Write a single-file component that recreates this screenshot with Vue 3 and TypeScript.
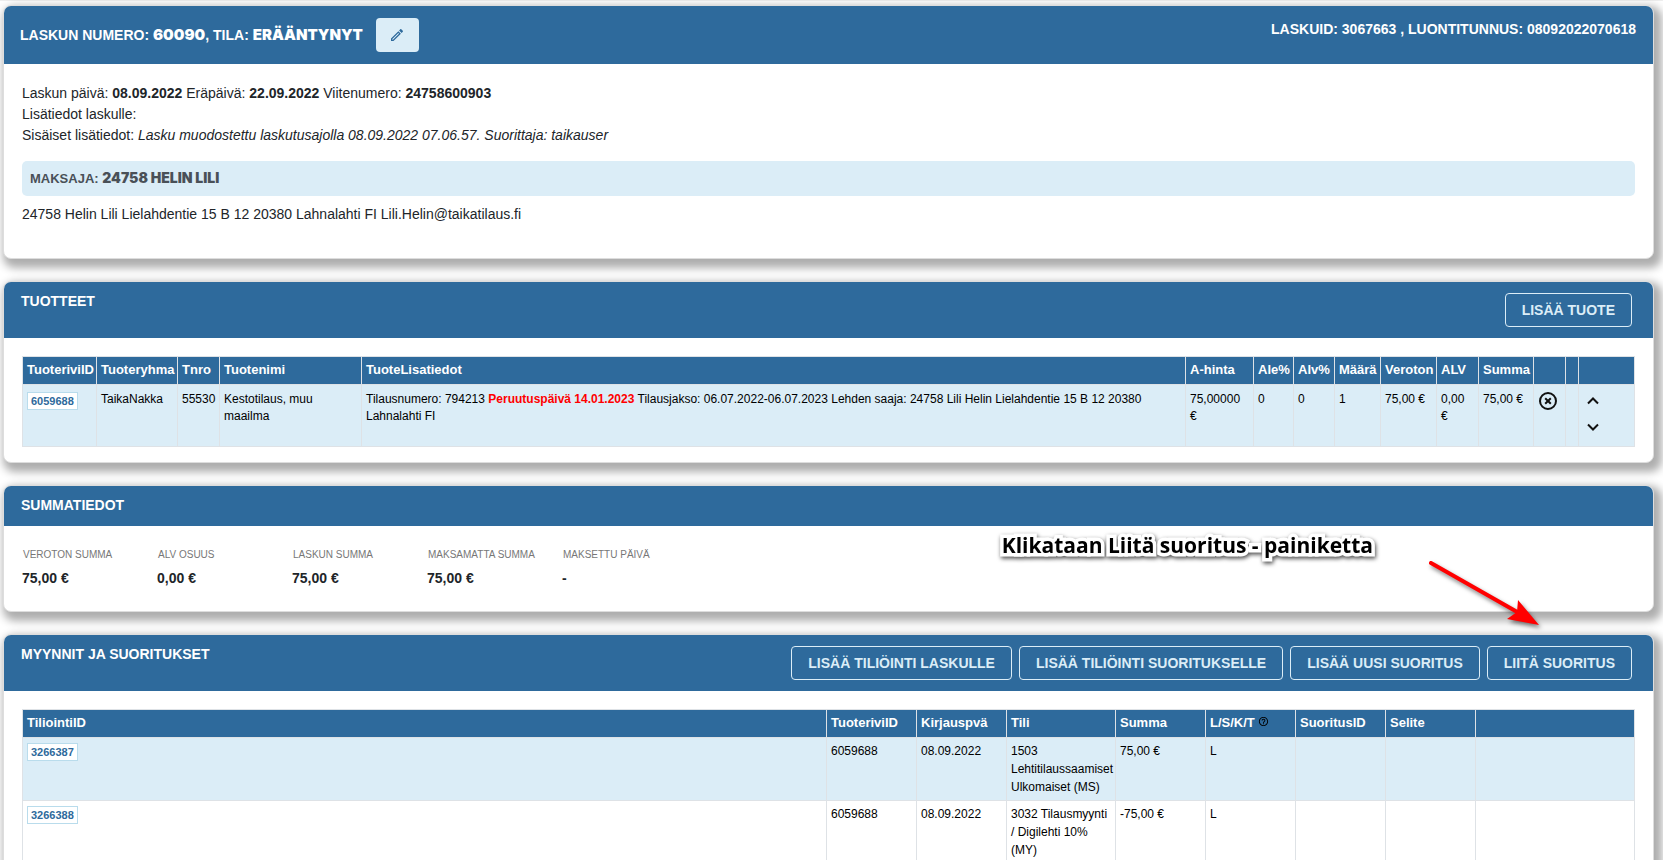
<script setup lang="ts">
interface Column {
  label: string
  size: string
  help?: boolean
}

interface SumItem {
  label: string
  value: string
}

interface Posting {
  id: string
  row: string
  date: string
  account: string
  sum: string
  kind: string
}

const productColumns: Column[] = [
  { label: 'TuoteriviID', size: 'w74' },
  { label: 'Tuoteryhma', size: 'w81' },
  { label: 'Tnro', size: 'w42' },
  { label: 'Tuotenimi', size: 'w142' },
  { label: 'TuoteLisatiedot', size: 'rest' },
  { label: 'A-hinta', size: 'w68' },
  { label: 'Ale%', size: 'w40' },
  { label: 'Alv%', size: 'w41' },
  { label: 'Määrä', size: 'w46' },
  { label: 'Veroton', size: 'w56' },
  { label: 'ALV', size: 'w42' },
  { label: 'Summa', size: 'w55' },
  { label: '', size: 'w32' },
  { label: '', size: 'w13' },
  { label: '', size: 'w56' },
]

const sums: SumItem[] = [
  { label: 'VEROTON SUMMA', value: '75,00 €' },
  { label: 'ALV OSUUS', value: '0,00 €' },
  { label: 'LASKUN SUMMA', value: '75,00 €' },
  { label: 'MAKSAMATTA SUMMA', value: '75,00 €' },
  { label: 'MAKSETTU PÄIVÄ', value: '-' },
]

const actions: string[] = [
  'LISÄÄ TILIÖINTI LASKULLE',
  'LISÄÄ TILIÖINTI SUORITUKSELLE',
  'LISÄÄ UUSI SUORITUS',
  'LIITÄ SUORITUS',
]

const postingColumns: Column[] = [
  { label: 'TiliointiID', size: 'rest' },
  { label: 'TuoteriviID', size: 'w90' },
  { label: 'Kirjauspvä', size: 'w90' },
  { label: 'Tili', size: 'w109' },
  { label: 'Summa', size: 'w90' },
  { label: 'L/S/K/T', size: 'w90', help: true },
  { label: 'SuoritusID', size: 'w90' },
  { label: 'Selite', size: 'w90' },
  { label: '', size: 'w159' },
]

const postings: Posting[] = [
  { id: '3266387', row: '6059688', date: '08.09.2022', account: '1503 Lehtitilaussaamiset Ulkomaiset (MS)', sum: '75,00 €', kind: 'L' },
  { id: '3266388', row: '6059688', date: '08.09.2022', account: '3032 Tilausmyynti / Digilehti 10% (MY)', sum: '-75,00 €', kind: 'L' },
]
</script>

<template>
  <main class="page">
    <section class="panel invoice">
      <header class="bar">
        <div class="bar-lead">
          <h2>LASKUN NUMERO: <b>60090</b>, TILA: <b>ERÄÄNTYNYT</b></h2>
          <button type="button" class="edit" aria-label="Muokkaa">
            <svg viewBox="0 0 24 24" width="16" height="16" aria-hidden="true">
              <path fill="currentColor" d="M14.06 9.02l.92.92L5.92 19H5v-.92l9.06-9.06M17.66 3c-.25 0-.51.1-.7.29l-1.83 1.83 3.75 3.75 1.83-1.83c.39-.39.39-1.02 0-1.41l-2.34-2.34c-.2-.2-.45-.29-.71-.29zm-3.6 3.19L3 17.25V21h3.75L17.81 9.94l-3.75-3.75z" />
            </svg>
          </button>
        </div>
        <p class="ids">LASKUID: 3067663 , LUONTITUNNUS: 08092022070618</p>
      </header>
      <div class="details">
        <p>Laskun päivä: <b>08.09.2022</b> Eräpäivä: <b>22.09.2022</b> Viitenumero: <b>24758600903</b></p>
        <p>Lisätiedot laskulle:</p>
        <p>Sisäiset lisätiedot: <i>Lasku muodostettu laskutusajolla 08.09.2022 07.06.57. Suorittaja: taikauser</i></p>
        <h3 class="payer">MAKSAJA: <b>24758 HELIN LILI</b></h3>
        <p>24758 Helin Lili Lielahdentie 15 B 12 20380 Lahnalahti FI Lili.Helin@taikatilaus.fi</p>
      </div>
    </section>

    <section class="panel products">
      <header class="bar">
        <h2>TUOTTEET</h2>
        <div class="actions">
          <button type="button" class="outline">LISÄÄ TUOTE</button>
        </div>
      </header>
      <div class="table-wrap">
        <table>
          <colgroup>
            <col v-for="(c, i) in productColumns" :key="i" :class="c.size" />
          </colgroup>
          <thead>
            <tr>
              <th v-for="(c, i) in productColumns" :key="i" scope="col">{{ c.label }}</th>
            </tr>
          </thead>
          <tbody>
            <tr>
              <td><a href="#" class="tag">6059688</a></td>
              <td>TaikaNakka</td>
              <td>55530</td>
              <td>Kestotilaus, muu maailma</td>
              <td>Tilausnumero: 794213 <b class="alert">Peruutuspäivä 14.01.2023</b> Tilausjakso: 06.07.2022-06.07.2023 Lehden saaja: 24758 Lili Helin Lielahdentie 15 B 12 20380 Lahnalahti FI</td>
              <td>75,00000 €</td>
              <td>0</td>
              <td>0</td>
              <td>1</td>
              <td>75,00 €</td>
              <td>0,00 €</td>
              <td>75,00 €</td>
              <td>
                <button type="button" class="icon" aria-label="Poista">
                  <svg viewBox="0 0 20 20" width="20" height="20" fill="none" stroke="currentColor" aria-hidden="true">
                    <circle cx="10" cy="10" r="8" stroke-width="2" />
                    <path d="M7.2 7.2l5.6 5.6M12.8 7.2l-5.6 5.6" stroke-width="2" />
                  </svg>
                </button>
              </td>
              <td></td>
              <td>
                <div class="movers">
                  <button type="button" class="icon" aria-label="Siirrä ylös">
                    <svg viewBox="0 0 20 20" width="20" height="20" fill="none" stroke="currentColor" aria-hidden="true">
                      <path d="M5 12.5l5-5 5 5" stroke-width="2" />
                    </svg>
                  </button>
                  <button type="button" class="icon" aria-label="Siirrä alas">
                    <svg viewBox="0 0 20 20" width="20" height="20" fill="none" stroke="currentColor" aria-hidden="true">
                      <path d="M5 7.5l5 5 5-5" stroke-width="2" />
                    </svg>
                  </button>
                </div>
              </td>
            </tr>
          </tbody>
        </table>
      </div>
    </section>

    <section class="panel summary">
      <header class="bar short">
        <h2>SUMMATIEDOT</h2>
      </header>
      <dl class="sums">
        <div v-for="s in sums" :key="s.label">
          <dt>{{ s.label }}</dt>
          <dd>{{ s.value }}</dd>
        </div>
      </dl>
      <div class="callout">
        <p>Klikataan Liitä suoritus - painiketta</p>
        <svg class="arrow" viewBox="0 0 120 76" width="120" height="76" aria-hidden="true">
          <path d="M7 6L95 56" fill="none" stroke="#ff0000" stroke-width="4" stroke-linecap="round" />
          <path d="M115 68L94 43L93 55L83 62Z" fill="#ff0000" />
        </svg>
      </div>
    </section>

    <section class="panel postings">
      <header class="bar">
        <h2>MYYNNIT JA SUORITUKSET</h2>
        <div class="actions">
          <button v-for="a in actions" :key="a" type="button" class="outline">{{ a }}</button>
        </div>
      </header>
      <div class="table-wrap">
        <table>
          <colgroup>
            <col v-for="(c, i) in postingColumns" :key="i" :class="c.size" />
          </colgroup>
          <thead>
            <tr>
              <th v-for="(c, i) in postingColumns" :key="i" scope="col">
                {{ c.label }}
                <svg v-if="c.help" class="help" viewBox="0 0 24 24" width="11" height="11" aria-hidden="true">
                  <path fill="currentColor" d="M11 18h2v-2h-2v2zm1-16C6.48 2 2 6.48 2 12s4.48 10 10 10 10-4.48 10-10S17.52 2 12 2zm0 18c-4.41 0-8-3.59-8-8s3.59-8 8-8 8 3.59 8 8-3.59 8-8 8zm0-14c-2.21 0-4 1.79-4 4h2c0-1.1.9-2 2-2s2 .9 2 2c0 2-3 1.75-3 5h2c0-2.25 3-2.5 3-5 0-2.21-1.79-4-4-4z" />
                </svg>
              </th>
            </tr>
          </thead>
          <tbody>
            <tr v-for="p in postings" :key="p.id">
              <td><a href="#" class="tag">{{ p.id }}</a></td>
              <td>{{ p.row }}</td>
              <td>{{ p.date }}</td>
              <td>{{ p.account }}</td>
              <td>{{ p.sum }}</td>
              <td>{{ p.kind }}</td>
              <td></td>
              <td></td>
              <td></td>
            </tr>
          </tbody>
        </table>
      </div>
    </section>
  </main>
</template>

<style>
html,
body {
  margin: 0;
  background: #ffffff;
}
body {
  height: 100vh;
  overflow: hidden;
}
</style>

<style scoped>
.page {
  box-sizing: border-box;
  padding: 4px 9px 0 3px;
  border-top: 1px solid #eeeeee;
  font-family: "Liberation Sans", Arial, sans-serif;
  font-size: 14px;
  line-height: 21px;
  color: #212529;
}
.panel {
  position: relative;
  border: 1px solid #dddddd;
  border-radius: 8px;
  background: #ffffff;
  box-shadow: 4px 5px 8px 4px rgba(0, 0, 0, 0.32);
  margin-bottom: 22px;
}
.bar {
  display: flex;
  justify-content: space-between;
  align-items: flex-start;
  box-sizing: border-box;
  min-height: 56px;
  padding: 11px 21px 11px 17px;
  border-radius: 7px 7px 0 0;
  background: #2e6a9c;
  color: #ffffff;
}
.bar.short {
  min-height: 40px;
  padding-bottom: 7px;
}
.invoice .bar {
  min-height: 58px;
  padding: 12px 17px 12px 16px;
}
.bar-lead {
  display: flex;
  align-items: center;
  gap: 13px;
}
h2 {
  margin: 0;
  font-size: 14px;
  line-height: 16px;
  font-weight: 700;
}
.bar-lead b,
.payer b {
  font-family: Inter, "Liberation Sans", Arial, sans-serif;
  font-weight: 900;
}
.bar-lead b {
  font-size: 15px;
}
.payer b {
  font-size: 14px;
}
.ids {
  margin: 3px 0 0;
  font-weight: 700;
  line-height: 16px;
}
button {
  font: inherit;
  cursor: pointer;
}
.edit {
  display: flex;
  align-items: center;
  justify-content: center;
  width: 43px;
  height: 34px;
  padding: 0;
  border: 0;
  border-radius: 4px;
  background: #dbedf7;
  color: #2e6a9c;
}
.actions {
  display: flex;
  gap: 7px;
}
.outline {
  height: 34px;
  padding: 0 16px;
  border: 1px solid #dbedf7;
  border-radius: 4px;
  background: transparent;
  color: #dbedf7;
  font-weight: 700;
  line-height: 32px;
}
.details {
  padding: 19px 18px 33px;
}
.details p {
  margin: 0;
}
.payer {
  margin: 15px 0 8px;
  padding: 6px 8px;
  border-radius: 5px;
  background: #dbedf7;
  color: #495057;
  font-size: 13px;
  line-height: 22px;
  font-weight: 700;
}
.table-wrap {
  padding: 18px 18px 15px;
}
table {
  width: 100%;
  table-layout: fixed;
  border-collapse: collapse;
  font-size: 12px;
  line-height: 17px;
  color: #000000;
}
th,
td {
  padding: 4px;
  border: 1px solid #dee2e6;
  text-align: left;
  vertical-align: top;
}
th {
  padding-bottom: 6px;
  background: #2e6a9c;
  color: #ffffff;
  font-size: 13px;
  font-weight: 700;
  white-space: nowrap;
}
tbody tr:nth-child(odd) {
  background: #dbedf7;
}
.products td {
  height: 51px;
  padding-top: 6px;
}
.postings td {
  line-height: 18px;
}
.w13 { width: 13px; }
.w32 { width: 32px; }
.w40 { width: 40px; }
.w41 { width: 41px; }
.w42 { width: 42px; }
.w46 { width: 46px; }
.w55 { width: 55px; }
.w56 { width: 56px; }
.w68 { width: 68px; }
.w74 { width: 74px; }
.w81 { width: 81px; }
.w90 { width: 90px; }
.w109 { width: 109px; }
.w142 { width: 142px; }
.w159 { width: 159px; }
.tag {
  display: block;
  width: fit-content;
  margin-top: 1px;
  padding: 0 3px;
  border: 1px solid #b9dcec;
  background: #ffffff;
  color: #2e6a9c;
  font-size: 11px;
  font-weight: 700;
  line-height: 16px;
  text-decoration: none;
}
.alert {
  color: #ff0000;
}
.icon {
  display: block;
  padding: 0;
  border: 0;
  background: none;
  color: #111111;
}
.icon svg {
  display: block;
}
.movers {
  display: grid;
  gap: 6px;
}
.help {
  color: #000000;
}
.sums {
  display: grid;
  grid-template-columns: repeat(5, 135px);
  margin: 0;
  padding: 18px 18px 22px;
}
dt {
  padding-left: 1px;
  font-size: 10px;
  color: #777777;
}
dd {
  margin: 3px 0 0;
  font-weight: 700;
}
.callout {
  position: absolute;
  top: 45px;
  right: 109px;
  display: flex;
  gap: 51px;
}
.callout p {
  margin: 0;
  color: #000000;
  font-family: "Open Sans", "Noto Sans", sans-serif;
  font-size: 21px;
  font-weight: 700;
  line-height: 28px;
  white-space: nowrap;
  paint-order: stroke fill;
  -webkit-text-stroke: 7px #ffffff;
  filter: drop-shadow(1px 2px 2px rgba(0, 0, 0, 0.7));
}
.arrow {
  margin-top: 26px;
  filter: drop-shadow(2px 3px 2px rgba(0, 0, 0, 0.5));
}
</style>
